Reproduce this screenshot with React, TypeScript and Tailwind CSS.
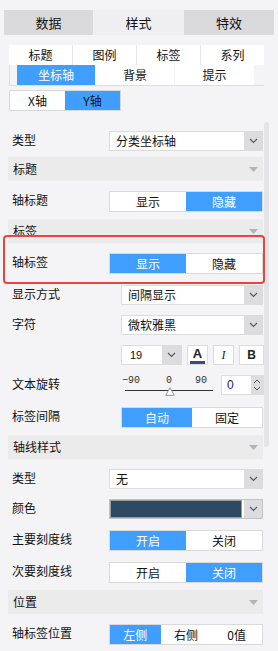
import React from "react";

const Chevron = () => (
  <svg width="9" height="6" viewBox="0 0 9 6">
    <path d="M1 1l3.5 3.5L8 1" stroke="#555" strokeWidth="1.1" fill="none" />
  </svg>
);

const Caret = () => (
  <svg width="9" height="5" viewBox="0 0 9 5">
    <path d="M0 0h9L4.5 5z" fill="#b4b4b8" />
  </svg>
);

const Select = ({ text, className = "" }: { text: string; className?: string }) => (
  <div className={`flex h-[20px] border border-[#dcdcdc] bg-white ${className}`}>
    <span className="flex-1 pl-[6px] text-[12px] leading-[18px] text-[#111]">{text}</span>
    <div className="w-[18px] bg-[#dcdcdf] flex items-center justify-center">
      <Chevron />
    </div>
  </div>
);

const Toggle = ({
  options,
  active,
  className = "",
}: {
  options: string[];
  active: number;
  className?: string;
}) => (
  <div className={`flex h-[21px] border border-[#d9d9d9] bg-white ${className}`}>
    {options.map((o, i) => (
      <div
        key={o}
        className={`flex-1 text-center text-[12px] leading-[19px] ${
          i === active ? "bg-[#409eff] text-white" : "text-[#111]"
        }`}
      >
        {o}
      </div>
    ))}
  </div>
);

const Row = ({
  label,
  className = "",
  children,
}: {
  label: string;
  className?: string;
  children: React.ReactNode;
}) => (
  <div className={`flex items-start ${className}`}>
    <div className="w-[101px] shrink-0 pl-[4px] text-[12px] leading-[18px] text-[#111]">{label}</div>
    <div className="flex-1">{children}</div>
  </div>
);

const Header = ({ title, className = "" }: { title: string; className?: string }) => (
  <div className={`h-[24px] bg-[#ebebec] flex items-center justify-between pl-[5px] pr-[5px] ${className}`}>
    <span className="text-[12px] leading-[16px] text-[#111]">{title}</span>
    <Caret />
  </div>
);

const App = () => {
  return (
    <div className="relative w-[278px] h-[651px] overflow-hidden bg-[#f4f4f6] font-['Noto_Sans_CJK_SC','Noto_Sans',sans-serif] pt-[10px]">
      {/* main tabs */}
      <div className="mx-[4px] flex h-[25px] text-[13px] leading-[25px] text-[#111]">
        <div className="w-[89px] bg-[#dadadd] text-center">数据</div>
        <div className="w-[91px] bg-[#efeff1] text-center">样式</div>
        <div className="w-[90px] bg-[#dadadd] text-center">特效</div>
      </div>

      {/* sub tabs */}
      <div className="ml-[9px] mt-[10px] w-[255px]">
        <div className="grid grid-cols-4 gap-px bg-[#e6e6e8] h-[20px] text-[12px] leading-[20px] text-[#111]">
          <div className="bg-white text-center">标题</div>
          <div className="bg-white text-center">图例</div>
          <div className="bg-white text-center">标签</div>
          <div className="bg-white text-center">系列</div>
        </div>
        <div className="flex gap-px border-l border-b border-[#dedee0] pl-[7px] h-[21px] text-[12px] leading-[20px]">
          <div className="w-[78px] bg-[#409eff] text-white text-center">坐标轴</div>
          <div className="w-[78px] bg-white text-[#111] text-center">背景</div>
          <div className="w-[79px] bg-white text-[#111] text-center">提示</div>
        </div>
      </div>

      <div className="ml-[9px] mt-[4px] flex w-[112px] h-[21px] border border-[#d8d8da] text-[12px] leading-[19px]">
        <div className="flex-1 bg-white text-center text-[#111]">X轴</div>
        <div className="flex-1 bg-[#409eff] text-center text-[#111]">Y轴</div>
      </div>

      {/* form */}
      <div className="pl-[8px] pr-[15px]">
        <Row label="类型" className="mt-[20px]">
          <Select text="分类坐标轴" />
        </Row>
        <Header title="标题" className="mt-[6px]" />
        <Row label="轴标题" className="mt-[10px]">
          <Toggle options={["显示", "隐藏"]} active={1} />
        </Row>
        <Header title="标签" className="mt-[7px]" />
        <Row label="轴标签" className="mt-[10px]">
          <Toggle options={["显示", "隐藏"]} active={0} />
        </Row>
        <Row label="显示方式" className="mt-[11px]">
          <Select text="间隔显示" className="ml-[12px]" />
        </Row>
        <Row label="字符" className="mt-[10px]">
          <Select text="微软雅黑" className="ml-[12px]" />
        </Row>
        <Row label="" className="mt-[10px]">
          <div className="ml-[12px] flex gap-[5px] h-[20px]">
            <div className="flex w-[61px] border border-[#dcdcdc] bg-white">
              <span className="flex-1 pl-[8px] text-[11px] leading-[18px] text-[#111] font-['Liberation_Sans',sans-serif]">19</span>
              <div className="w-[19px] bg-[#dcdcdf] flex items-center justify-center">
                <Chevron />
              </div>
            </div>
            <div className="w-[21px] border border-[#dcdcdc] bg-white flex flex-col items-center pt-[1px]">
              <span className="text-[13px] leading-[13px] font-bold text-[#222] font-['Liberation_Sans',sans-serif]">A</span>
              <span className="mt-[1px] w-[15px] h-[3px] bg-[#3e4a7c]" />
            </div>
            <div className="w-[21px] border border-[#dcdcdc] bg-white text-center text-[12px] leading-[18px] italic text-[#222] font-['Liberation_Serif',serif]">
              I
            </div>
            <div className="w-[25px] border border-[#dcdcdc] bg-white text-center text-[12px] leading-[18px] font-bold text-[#222] font-['Liberation_Sans',sans-serif]">
              B
            </div>
          </div>
        </Row>
        <Row label="文本旋转" className="mt-[10px]">
          <div className="ml-[12px] flex h-[20px]">
            <div className="relative w-[93px] h-[20px] ml-[1px]">
              <div className="flex pt-[1px] text-[10px] leading-[10px] text-[#333] font-['Liberation_Mono',monospace]">
                <span>−90</span>
                <span className="ml-[26px]">0</span>
                <span className="ml-[23px]">90</span>
              </div>
              <div className="mt-[4px] ml-[3px] w-[88px] h-px bg-[#333]" />
              <svg className="absolute left-[43px] top-[12px]" width="10" height="9" viewBox="0 0 10 9">
                <path d="M5 0.8L9.3 8.3H0.7z" fill="#fff" stroke="#888" strokeWidth="0.9" />
              </svg>
            </div>
            <div className="ml-[6px] flex w-[43px] border border-[#dcdcdc] bg-white">
              <span className="flex-1 pl-[5px] text-[12px] leading-[18px] text-[#1b1f5a] font-['Liberation_Sans',sans-serif]">0</span>
              <div className="w-[12px] bg-[#dcdcdf] flex flex-col items-center justify-center gap-[2px]">
                <svg width="8" height="5" viewBox="0 0 8 5">
                  <path d="M1 4l3-3 3 3" stroke="#555" strokeWidth="1" fill="none" />
                </svg>
                <svg width="8" height="5" viewBox="0 0 8 5">
                  <path d="M1 1l3 3 3-3" stroke="#555" strokeWidth="1" fill="none" />
                </svg>
              </div>
            </div>
          </div>
        </Row>
        <Row label="标签间隔" className="mt-[12px]">
          <Toggle options={["自动", "固定"]} active={0} className="ml-[12px]" />
        </Row>
        <Header title="轴线样式" className="mt-[7px]" />
        <Row label="类型" className="mt-[10px]">
          <Select text="无" />
        </Row>
        <Row label="颜色" className="mt-[10px]">
          <div className="flex h-[20px] border border-[#c4c4c4] bg-white">
            <div className="flex-1 border border-[#9a9a9a] bg-[#2c4a63]" />
            <div className="ml-[2px] w-[18px] bg-[#dcdcdf] flex items-center justify-center">
              <Chevron />
            </div>
          </div>
        </Row>
        <Row label="主要刻度线" className="mt-[11px]">
          <Toggle options={["开启", "关闭"]} active={0} />
        </Row>
        <Row label="次要刻度线" className="mt-[11px]">
          <Toggle options={["开启", "关闭"]} active={1} />
        </Row>
        <Header title="位置" className="mt-[7px]" />
        <Row label="轴标签位置" className="mt-[10px]">
          <Toggle options={["左侧", "右侧", "0值"]} active={0} />
        </Row>
      </div>

      {/* scrollbar */}
      <div className="absolute left-[264px] top-[122px] w-[5px] h-[325px] rounded-full bg-[#e4e4e6]" />

      {/* highlight box */}
      <div className="absolute left-[3px] top-[235px] w-[262px] h-[49px] border-2 border-[#e8453c] rounded-[4px]" />
    </div>
  );
};

export default App;
